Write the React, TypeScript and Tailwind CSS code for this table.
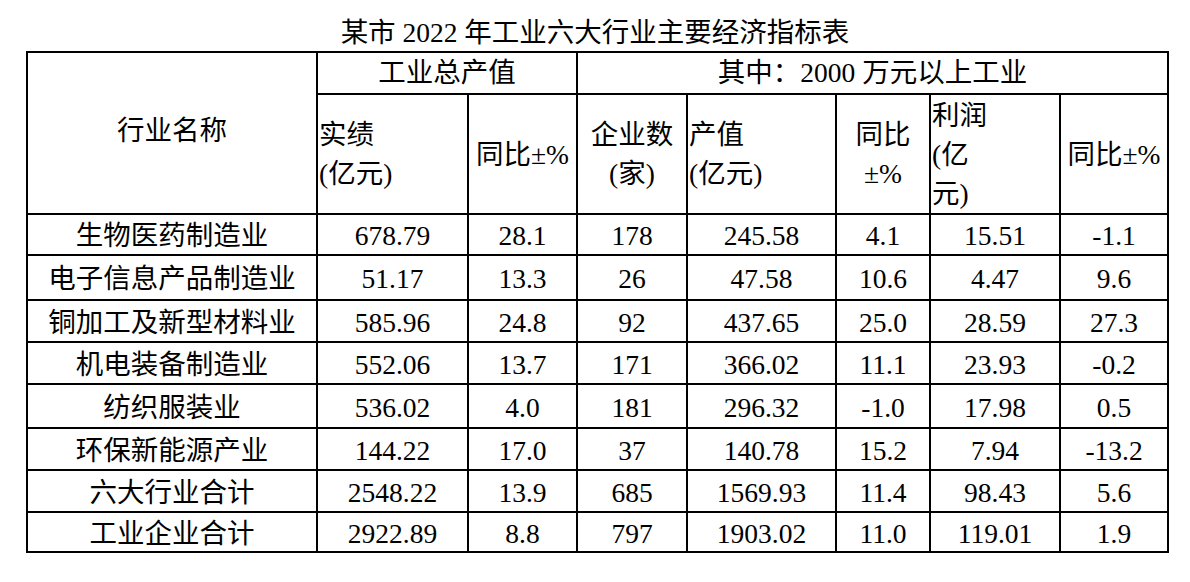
import React from "react";

const rows = [
  { name: "生物医药制造业", v: ["678.79", "28.1", "178", "245.58", "4.1", "15.51", "-1.1"], h: "h-[41px]" },
  { name: "电子信息产品制造业", v: ["51.17", "13.3", "26", "47.58", "10.6", "4.47", "9.6"], h: "h-[45px]" },
  { name: "铜加工及新型材料业", v: ["585.96", "24.8", "92", "437.65", "25.0", "28.59", "27.3"], h: "h-[42px]" },
  { name: "机电装备制造业", v: ["552.06", "13.7", "171", "366.02", "11.1", "23.93", "-0.2"], h: "h-[42px]" },
  { name: "纺织服装业", v: ["536.02", "4.0", "181", "296.32", "-1.0", "17.98", "0.5"], h: "h-[44px]" },
  { name: "环保新能源产业", v: ["144.22", "17.0", "37", "140.78", "15.2", "7.94", "-13.2"], h: "h-[42px]" },
  { name: "六大行业合计", v: ["2548.22", "13.9", "685", "1569.93", "11.4", "98.43", "5.6"], h: "h-[42px]" },
  { name: "工业企业合计", v: ["2922.89", "8.8", "797", "1903.02", "11.0", "119.01", "1.9"], h: "h-[40px]" },
];

const cell = "border-r-2 border-b-2 border-black p-0 align-middle font-normal";

export default function App() {
  return (
    <div
      className="w-[1190px] h-[582px] bg-white text-black text-[27.5px]"
      style={{ fontFamily: '"Liberation Serif", "Noto Sans CJK SC", serif' }}
    >
      <div className="pt-[15px] h-[51px] leading-[36px] text-center">
        某市 2022 年工业六大行业主要经济指标表
      </div>

      <table className="ml-[26px] table-fixed border-separate border-spacing-0 border-l-2 border-t-2 border-black w-[1143px]">
        <colgroup>
          <col className="w-[290px]" />
          <col className="w-[151px]" />
          <col className="w-[109px]" />
          <col className="w-[110px]" />
          <col className="w-[149px]" />
          <col className="w-[94px]" />
          <col className="w-[130px]" />
          <col className="w-[108px]" />
        </colgroup>
        <thead>
          <tr className="h-[42px]">
            <th rowSpan={2} className={`${cell} text-center`}>
              <div className="-mt-[4px]">行业名称</div>
            </th>
            <th colSpan={2} className={`${cell} text-center leading-[40px]`}>
              工业总产值
            </th>
            <th colSpan={5} className={`${cell} text-center leading-[40px]`}>
              其中：2000 万元以上工业
            </th>
          </tr>
          <tr className="h-[120px] leading-[39px]">
            <th className={`${cell} text-left pl-[1px]`}>
              实绩
              <br />
              (亿元)
            </th>
            <th className={`${cell} text-center`}>同比±%</th>
            <th className={`${cell} text-center`}>
              企业数
              <br />
              (家)
            </th>
            <th className={`${cell} text-left pl-[1px]`}>
              产值
              <br />
              (亿元)
            </th>
            <th className={`${cell} text-center`}>
              同比
              <br />
              ±%
            </th>
            <th className={`${cell} text-left pl-[1px]`}>
              利润
              <br />
              (亿
              <br />
              元)
            </th>
            <th className={`${cell} text-center`}>同比±%</th>
          </tr>
        </thead>
        <tbody>
          {rows.map((r) => (
            <tr key={r.name} className={`${r.h} leading-[32px]`}>
              <td className={`${cell} text-center pt-[3px]`}>{r.name}</td>
              {r.v.map((x, i) => (
                <td key={i} className={`${cell} text-center pt-[3px]`}>
                  {x}
                </td>
              ))}
            </tr>
          ))}
        </tbody>
      </table>
    </div>
  );
}
